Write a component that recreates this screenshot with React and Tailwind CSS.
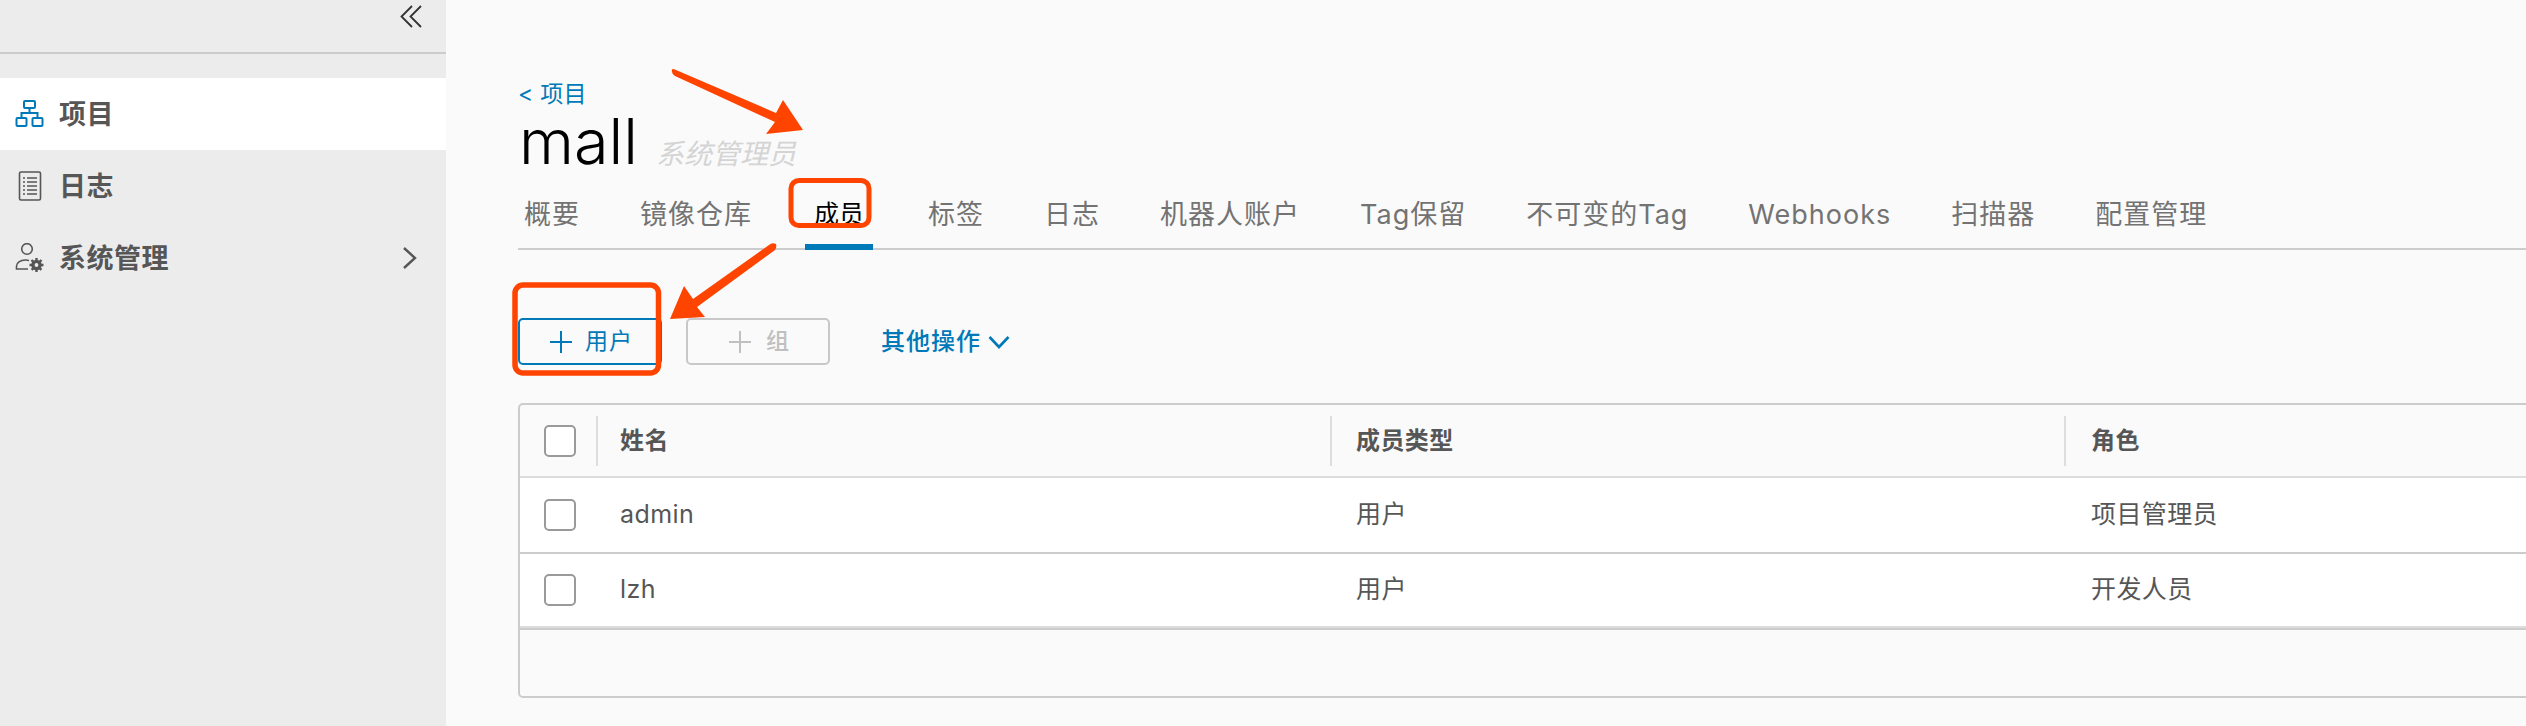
import React from "react";

const font = "font-['Inter','Noto_Sans_CJK_SC',sans-serif]";

const tabs = [
  { label: "概要" },
  { label: "镜像仓库" },
  { label: "成员", active: true },
  { label: "标签" },
  { label: "日志" },
  { label: "机器人账户" },
  { label: "Tag保留" },
  { label: "不可变的Tag" },
  { label: "Webhooks" },
  { label: "扫描器" },
  { label: "配置管理" },
];

const members = [
  { name: "admin", type: "用户", role: "项目管理员" },
  { name: "lzh", type: "用户", role: "开发人员" },
];

function ProjectIcon() {
  return (
    <svg width="30" height="30" viewBox="0 0 30 30" fill="none" stroke="#0079b8" strokeWidth="2">
      <rect x="9" y="2" width="11" height="7" rx="1" />
      <path d="M14.5 9v5M6.5 19v-5h16v5" />
      <rect x="1.5" y="19" width="10" height="8" rx="1" />
      <rect x="17.5" y="19" width="10" height="8" rx="1" />
    </svg>
  );
}

function LogIcon() {
  return (
    <svg width="30" height="30" viewBox="0 0 30 30" fill="none" stroke="#565656">
      <rect x="4.5" y="1" width="21" height="28" rx="1.5" strokeWidth="1.6" />
      <path d="M8 7h2M12 7h10M8 11h2M12 11h10M8 15h2M12 15h10M8 19h2M12 19h10M8 23h2M12 23h10" strokeWidth="1.4" />
    </svg>
  );
}

function AdminIcon() {
  return (
    <svg width="30" height="30" viewBox="0 0 30 30" fill="none" stroke="#565656" strokeWidth="1.6">
      <circle cx="12" cy="6" r="5.3" />
      <path d="M13 26H1.5v-3c0-3 3.5-6 9-6 1.5 0 2.5 .2 3.5 .5" />
      <circle cx="21.5" cy="22" r="3.6" strokeWidth="3.4" />
      <path
        d="M21.5 15v14M14.5 22h14M16.5 17l10 10M26.5 17l-10 10"
        strokeWidth="2.4"
        strokeDasharray="2.6 8.8"
      />
    </svg>
  );
}

function SideItem({ icon, label, active, chevron, gap }) {
  return (
    <div className={`flex h-[72px] items-center pl-[15px] ${active ? "bg-white" : ""}`}>
      {icon}
      <span className={`text-[27px] font-bold leading-none tracking-[0.5px] text-[#565656] ${gap}`}>{label}</span>
      {chevron && (
        <svg className="ml-auto mr-[28px]" width="16" height="24" viewBox="0 0 16 24" fill="none" stroke="#565656" strokeWidth="2.4">
          <path d="M2 2l11 10L2 22" />
        </svg>
      )}
    </div>
  );
}

function Checkbox() {
  return <div className="h-[32px] w-[32px] rounded-[5px] border-2 border-[#9a9a9a] bg-white" />;
}

function Annotations() {
  return (
    <svg className="pointer-events-none absolute left-0 top-0" width="2526" height="726" fill="none">
      <rect x="791" y="180.5" width="78" height="45" rx="8" stroke="#ff4400" strokeWidth="5" />
      <rect x="515" y="285" width="143.5" height="88" rx="8" stroke="#ff4400" strokeWidth="5.5" />
      <path d="M672 70Q672 68 676 70L776 113L783 100L803 130L766 134L775 122L675 76Q671 73 672 70Z" fill="#ff4400" />
      <path d="M776 244Q772 242 769 245L693 299L684 286L670 319L705 317L697 307L775 250Q777 247 776 244Z" fill="#ff4400" />
    </svg>
  );
}

export default function App() {
  return (
    <div className={`relative flex h-[726px] w-[2526px] overflow-hidden bg-[#fafafa] ${font}`}>
      {/* Sidebar */}
      <aside className="w-[446px] shrink-0 bg-[#ececec]">
        <div className="flex h-[54px] justify-end border-b-2 border-[#cccccc] pr-[24px] pt-[5px]">
          <svg width="22" height="23" viewBox="0 0 22 23" fill="none" stroke="#333333" strokeWidth="1.8">
            <path d="M12 1L1.5 11.5 12 22M21 1L10.5 11.5 21 22" />
          </svg>
        </div>
        <div className="mt-[24px]">
          <SideItem icon={<ProjectIcon />} label="项目" active gap="ml-[14px]" />
          <SideItem icon={<LogIcon />} label="日志" gap="ml-[14px]" />
          <SideItem icon={<AdminIcon />} label="系统管理" chevron gap="ml-[14px]" />
        </div>
      </aside>

      {/* Main */}
      <main className="min-w-0 flex-1 overflow-hidden pl-[72px] pt-[76px]">
        <div className="h-[34px] text-[23px] leading-[36px] tracking-[0.3px] text-[#0079b8]">&lt; 项目</div>
        <div className="flex h-[60px] items-baseline">
          <h1 className="ml-[1px] text-[63px] font-light leading-[62px] text-black">mall</h1>
          <span className="ml-[18px] text-[28px] italic leading-none text-[#d4d4d4]">系统管理员</span>
        </div>

        {/* Tabs */}
        <div className="mt-[10px] flex h-[70px] w-[2008px] items-center border-b-2 border-[#cccccc] pl-[6px] pt-[2px]">
          {tabs.map((tab, i) =>
            tab.active ? (
              <div
                key={tab.label}
                className="relative ml-[53px] flex h-full items-center px-[9px] text-[25px] text-black"
              >
                {tab.label}
                <div className="absolute bottom-[-2px] left-0 h-[6px] w-full bg-[#0079b8]" />
              </div>
            ) : (
              <div
                key={tab.label}
                className={`text-[27px] tracking-[1px] text-[#737373] ${
                  i === 0 ? "" : tabs[i - 1].active ? "ml-[55px]" : "ml-[60px]"
                }`}
              >
                {tab.label}
              </div>
            )
          )}
        </div>

        {/* Toolbar */}
        <div className="mt-[68px] flex items-center">
          <button className="flex h-[47px] w-[144px] items-center rounded-[5px] border-2 border-[#0079b8] pl-[29px] text-[23px] tracking-[1px] text-[#0079b8]">
            <svg width="24" height="24" viewBox="0 0 24 24" stroke="#0079b8" strokeWidth="2">
              <path d="M12 1v22M1 12h22" />
            </svg>
            <span className="ml-[12px]">用户</span>
          </button>
          <button className="ml-[24px] flex h-[47px] w-[144px] items-center rounded-[5px] border-2 border-[#c8c8c8] pl-[40px] text-[23px] text-[#c0c0c0]">
            <svg width="24" height="24" viewBox="0 0 24 24" stroke="#c0c0c0" strokeWidth="2">
              <path d="M12 1v22M1 12h22" />
            </svg>
            <span className="ml-[14px] font-medium">组</span>
          </button>
          <button className="ml-[51px] flex items-center text-[24px] font-medium tracking-[1px] text-[#0079b8]">
            其他操作
            <svg className="ml-[7px]" width="22" height="14" viewBox="0 0 22 14" fill="none" stroke="#0079b8" strokeWidth="2.6">
              <path d="M1.5 2L11 12l9.5-10" />
            </svg>
          </button>
        </div>

        {/* Table */}
        <div className="mt-[38px] h-[295px] w-[2100px] rounded-[5px] border-2 border-[#cccccc]">
          <div className="flex h-[73px] items-center border-b-2 border-[#dddddd] text-[24px] font-semibold tracking-[0.4px] text-[#565656]">
            <div className="flex h-[50px] w-[78px] items-center border-r-2 border-[#dddddd] pl-[24px]">
              <Checkbox />
            </div>
            <div className="flex h-[50px] w-[734px] items-center border-r-2 border-[#dddddd] pl-[22px]">姓名</div>
            <div className="flex h-[50px] w-[734px] items-center border-r-2 border-[#dddddd] pl-[24px]">成员类型</div>
            <div className="flex h-[50px] items-center pl-[25px]">角色</div>
          </div>
          {members.map((m, i) => (
            <div
              key={m.name}
              className={`flex items-center bg-white text-[25px] tracking-[0.4px] text-[#565656] ${
                i === 0 ? "h-[76px] border-b-2 border-[#cccccc]" : "h-[74px] border-b-2 border-[#dddddd]"
              }`}
            >
              <div className="w-[78px] pl-[24px]">
                <Checkbox />
              </div>
              <div className="w-[734px] pl-[22px]">{m.name}</div>
              <div className="w-[734px] pl-[24px]">{m.type}</div>
              <div className="pl-[25px]">{m.role}</div>
            </div>
          ))}
          <div className="h-[68px] border-t-2 border-[#cccccc]" />
        </div>
      </main>

      <Annotations />
    </div>
  );
}
